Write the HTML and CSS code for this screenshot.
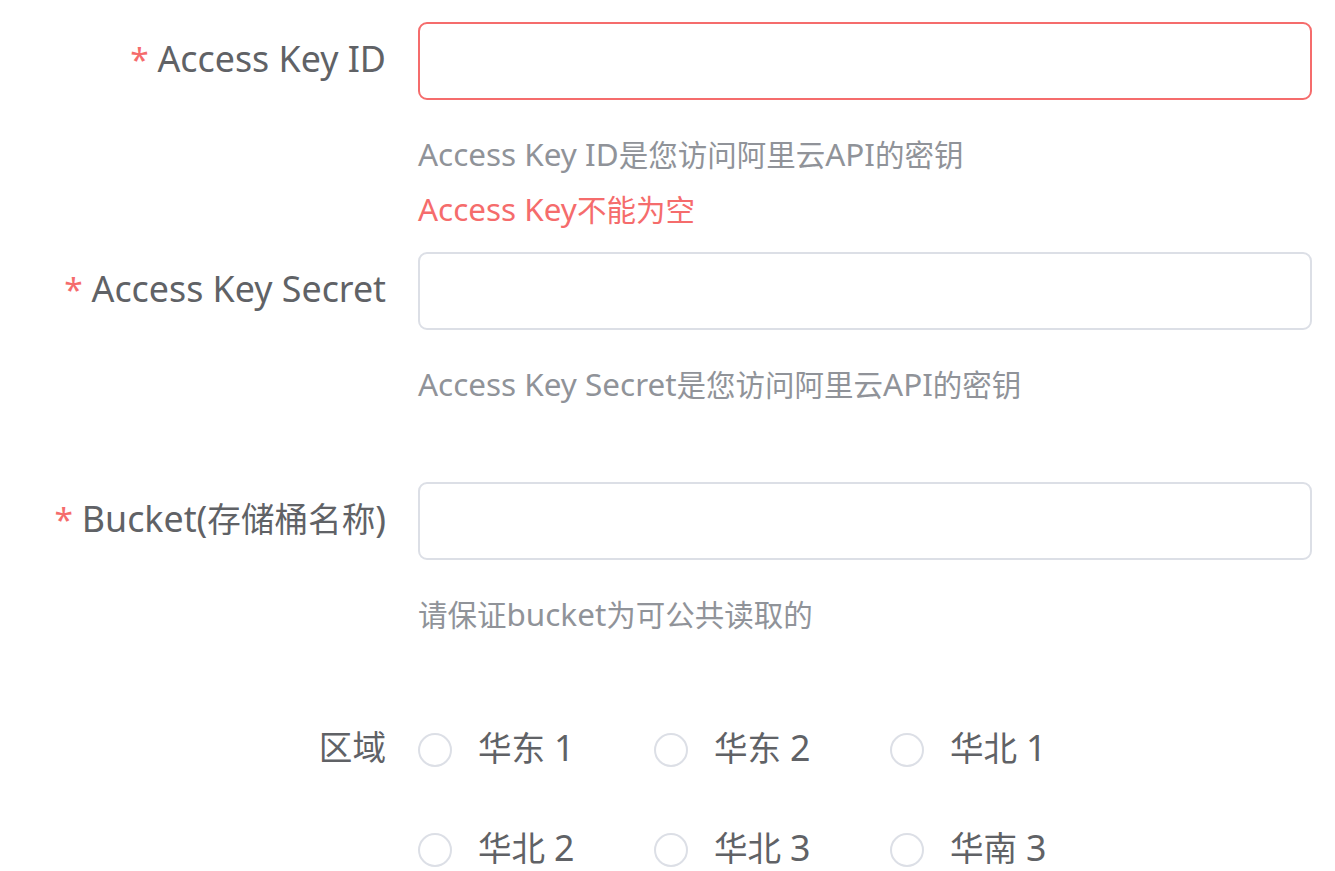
FILE: index.html
```html
<!DOCTYPE html>
<html lang="zh-CN">
<head>
<meta charset="utf-8">
<title>OSS 配置</title>
<link rel="stylesheet" href="styles.css">
</head>
<body>
<form class="form">
  <div class="item">
    <label class="label"><span class="star">*</span> <span class="en">Access Key ID</span></label>
    <div class="content">
      <div class="input is-error"></div>
      <div class="tip-wrap">
        <div class="tip"><span class="en">Access Key ID</span>是您访问阿里云<span class="en">API</span>的密钥</div>
        <div class="error"><span class="en">Access Key</span>不能为空</div>
      </div>
    </div>
  </div>
  <div class="item">
    <label class="label"><span class="star">*</span> <span class="en">Access Key Secret</span></label>
    <div class="content">
      <div class="input"></div>
      <div class="tip-wrap">
        <div class="tip"><span class="en">Access Key Secret</span>是您访问阿里云<span class="en">API</span>的密钥</div>
      </div>
    </div>
  </div>
  <div class="item">
    <label class="label"><span class="star">*</span> <span class="en">Bucket(</span>存储桶名称<span class="en">)</span></label>
    <div class="content">
      <div class="input"></div>
      <div class="tip-wrap">
        <div class="tip">请保证<span class="en">bucket</span>为可公共读取的</div>
      </div>
    </div>
  </div>
  <div class="item item-last">
    <label class="label label-radio">区域</label>
    <div class="content">
      <div class="radios">
        <label class="radio"><span class="circle"></span><span class="radio-text">华东 <span class="en">1</span></span></label>
        <label class="radio"><span class="circle"></span><span class="radio-text">华东 <span class="en">2</span></span></label>
        <label class="radio"><span class="circle"></span><span class="radio-text">华北 <span class="en">1</span></span></label>
        <label class="radio"><span class="circle"></span><span class="radio-text">华北 <span class="en">2</span></span></label>
        <label class="radio"><span class="circle"></span><span class="radio-text">华北 <span class="en">3</span></span></label>
        <label class="radio"><span class="circle"></span><span class="radio-text">华南 <span class="en">3</span></span></label>
      </div>
    </div>
  </div>
</form>
</body>
</html>
```

FILE: styles.css
```css
html, body {
  margin: 0;
  padding: 0;
  background: #ffffff;
}
body {
  font-family: "Noto Sans", "Noto Sans CJK SC", sans-serif;
  color: #606266;
  overflow: hidden;
}
.en {
  font-size: 1.066em;
}
.form {
  padding: 22px 23px 0 0;
}
.item {
  display: flex;
  margin-bottom: 69px;
}
.item-last {
  margin-bottom: 0;
  padding-top: 18px;
}
.label {
  width: 386px;
  flex: none;
  padding-right: 32px;
  text-align: right;
  font-size: 33.6px;
  line-height: 72px;
  height: 78px;
  color: #606266;
  white-space: nowrap;
}
.label-radio {
  height: 40px;
  line-height: 34px;
}
.star {
  color: #f56c6c;
}
.content {
  flex: 1;
  min-width: 0;
}
.input {
  height: 78px;
  box-sizing: border-box;
  border: 2px solid #dcdfe6;
  border-radius: 9px;
  background: #fff;
}
.input.is-error {
  border-color: #f56c6c;
}
.tip-wrap {
  position: relative;
  margin-top: 27px;
}
.tip {
  font-size: 29.5px;
  line-height: 54px;
  height: 56px;
  color: #909399;
  white-space: nowrap;
}
.error {
  position: absolute;
  left: 0;
  top: 100%;
  font-size: 29.5px;
  line-height: 52px;
  color: #f56c6c;
  white-space: nowrap;
}
.radios {
  display: flex;
  flex-wrap: wrap;
  row-gap: 60px;
  width: 708px;
}
.radio {
  width: 236px;
  height: 40px;
  display: flex;
  align-items: center;
}
.circle {
  width: 34px;
  height: 34px;
  box-sizing: border-box;
  border: 2px solid #dcdfe6;
  border-radius: 50%;
  flex: none;
}
.radio-text {
  padding-left: 26px;
  font-size: 33.6px;
  line-height: 34px;
  color: #606266;
  white-space: nowrap;
  position: relative;
  top: -3px;
}
```
